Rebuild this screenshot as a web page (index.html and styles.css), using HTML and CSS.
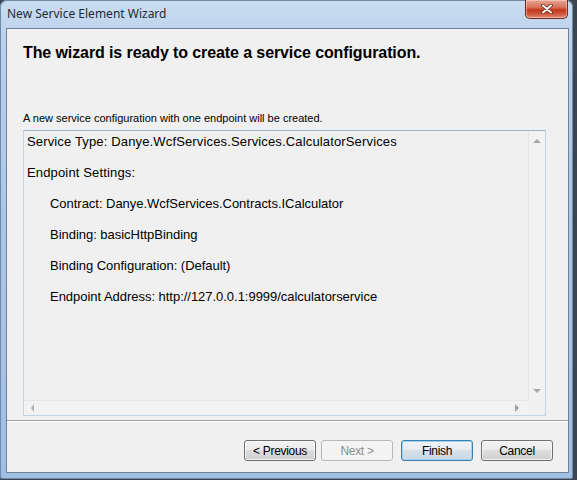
FILE: index.html
```html
<!DOCTYPE html>
<html>
<head>
<meta charset="utf-8">
<title>New Service Element Wizard</title>
<link rel="stylesheet" href="styles.css">
</head>
<body>
<div class="window">
  <div class="titlebar">
    <span class="title">New Service Element Wizard</span>
    <div class="close">
      <svg width="14" height="10" viewBox="0 0 14 10">
        <path d="M3 1.5 L11 8.5 M11 1.5 L3 8.5" stroke="#5a2a22" stroke-width="3.6" stroke-linecap="round"/>
        <path d="M3 1.5 L11 8.5 M11 1.5 L3 8.5" stroke="#ffffff" stroke-width="2" stroke-linecap="round"/>
      </svg>
    </div>
  </div>
  <div class="client">
    <h1 class="heading">The wizard is ready to create a service configuration.</h1>
    <p class="desc">A new service configuration with one endpoint will be created.</p>
    <div class="box">
      <div class="content">
        <div class="line">Service Type: Danye.WcfServices.Services.CalculatorServices</div>
        <div class="line">Endpoint Settings:</div>
        <div class="line indent">Contract: Danye.WcfServices.Contracts.ICalculator</div>
        <div class="line indent">Binding: basicHttpBinding</div>
        <div class="line indent">Binding Configuration: (Default)</div>
        <div class="line indent">Endpoint Address: http://127.0.0.1:9999/calculatorservice</div>
      </div>
      <div class="vscroll">
        <span class="arrow up"></span>
        <span class="arrow down"></span>
      </div>
      <div class="hscroll">
        <span class="arrow left"></span>
        <span class="arrow right"></span>
      </div>
      <div class="corner"></div>
    </div>
    <div class="separator"></div>
    <div class="footer">
      <button class="btn">&lt; Previous</button>
      <button class="btn disabled">Next &gt;</button>
      <button class="btn default">Finish</button>
      <button class="btn">Cancel</button>
    </div>
  </div>
</div>
</body>
</html>
```

FILE: styles.css
```css
html, body {
  margin: 0;
  padding: 0;
}
body {
  width: 577px;
  height: 480px;
  background: #3b4550;
  font-family: "Liberation Sans", Arial, sans-serif;
  overflow: hidden;
}
.window {
  width: 573px;
  height: 479px;
  box-sizing: border-box;
  padding: 0 4px 6px 6px;
  display: flex;
  flex-direction: column;
  border-radius: 7px 7px 3px 3px;
  background: linear-gradient(180deg, #c9dcf1 0%, #b9d0ea 10%, #a9c6e6 50%, #9fc0e4 100%);
  box-shadow: inset 0 0 0 1px #6f8aa6;
}
.titlebar {
  height: 28px;
  display: flex;
  align-items: flex-start;
}
.title {
  font-family: "Noto Sans", "Open Sans", sans-serif;
  font-size: 12px;
  color: #1e2a38;
  line-height: 28px;
  margin-left: 1px;
  letter-spacing: 0;
}
.close {
  margin-left: auto;
  margin-right: 1px;
  width: 43px;
  height: 19px;
  box-sizing: border-box;
  border: 1px solid #6d2a20;
  border-top: none;
  border-radius: 0 0 5px 5px;
  background: linear-gradient(180deg, #e8a591 0%, #d8735c 40%, #c2381c 55%, #cf5a3e 80%, #e4907a 100%);
  display: flex;
  align-items: center;
  justify-content: center;
  box-shadow: inset 0 0 0 1px rgba(255, 220, 210, 0.5);
}
.client {
  flex: 1;
  background: #f0f0f0;
  border: 1px solid #6f8299;
  display: flex;
  flex-direction: column;
}
.heading {
  margin: 14px 0 0 16px;
  font-size: 16px;
  line-height: 20px;
  font-weight: bold;
  color: #000;
  letter-spacing: -0.1px;
}
.desc {
  margin: 49px 0 0 16px;
  font-size: 11px;
  line-height: 13px;
  color: #000;
  letter-spacing: 0;
}
.box {
  margin: 5px 22px 0 16px;
  height: 286px;
  box-sizing: border-box;
  border: 1px solid #c6d3e0;
  border-top-color: #9eb0c4;
  display: grid;
  grid-template-columns: 1fr 17px;
  grid-template-rows: 1fr 15px;
  background: #f0f0f0;
}
.content {
  padding: 3px 0 0 3px;
  display: flex;
  flex-direction: column;
  gap: 15px;
  overflow: hidden;
}
.line {
  font-size: 13px;
  line-height: 16px;
  height: 16px;
  color: #000;
  white-space: nowrap;
  letter-spacing: 0.15px;
}
.line.indent {
  padding-left: 23px;
  letter-spacing: -0.03px;
}
.vscroll {
  border-left: 1px solid #e6e6e6;
  background: #f2f2f2;
  display: flex;
  flex-direction: column;
  justify-content: space-between;
  align-items: center;
  padding: 8px 0 7px;
}
.hscroll {
  border-top: 1px solid #e6e6e6;
  background: #f2f2f2;
  display: flex;
  justify-content: space-between;
  align-items: center;
  padding: 0 9px 0 7px;
}
.corner {
  background: #f0f0f0;
}
.arrow {
  width: 0;
  height: 0;
  display: block;
}
.arrow.up {
  border-left: 4px solid transparent;
  border-right: 4px solid transparent;
  border-bottom: 4px solid #a8a8a8;
}
.arrow.down {
  border-left: 4px solid transparent;
  border-right: 4px solid transparent;
  border-top: 4px solid #a8a8a8;
}
.arrow.left {
  border-top: 4px solid transparent;
  border-bottom: 4px solid transparent;
  border-right: 3px solid #b0b0b0;
}
.arrow.right {
  border-top: 4px solid transparent;
  border-bottom: 4px solid transparent;
  border-left: 4px solid #a0a0a0;
}
.separator {
  margin-top: 4px;
  height: 1px;
  background: #a0a0a0;
  border-bottom: 1px solid #ffffff;
}
.footer {
  display: flex;
  justify-content: flex-end;
  gap: 8px;
  padding: 18px 15px 0 0;
}
.btn {
  width: 72px;
  height: 21px;
  box-sizing: border-box;
  border: 1px solid #707070;
  border-radius: 3px;
  background: linear-gradient(180deg, #f2f2f2 0%, #ebebeb 49%, #dddddd 50%, #cfcfcf 100%);
  box-shadow: inset 0 0 0 1px rgba(255, 255, 255, 0.7);
  font-family: "Liberation Sans", Arial, sans-serif;
  font-size: 12px;
  color: #000;
  padding: 0;
  letter-spacing: -0.3px;
}
.btn:first-child {
  margin-right: -3px;
}
.btn.disabled {
  border-color: #b5b9bc;
  background: #f4f4f4;
  color: #8c8c8c;
  box-shadow: none;
}
.btn.default {
  border-color: #3c7fb1;
  background: linear-gradient(180deg, #f0f4f7 0%, #e6ecf1 49%, #d7e1ea 50%, #cbd8e3 100%);
  box-shadow: inset 0 0 0 1px #9ed4f2;
}
```
